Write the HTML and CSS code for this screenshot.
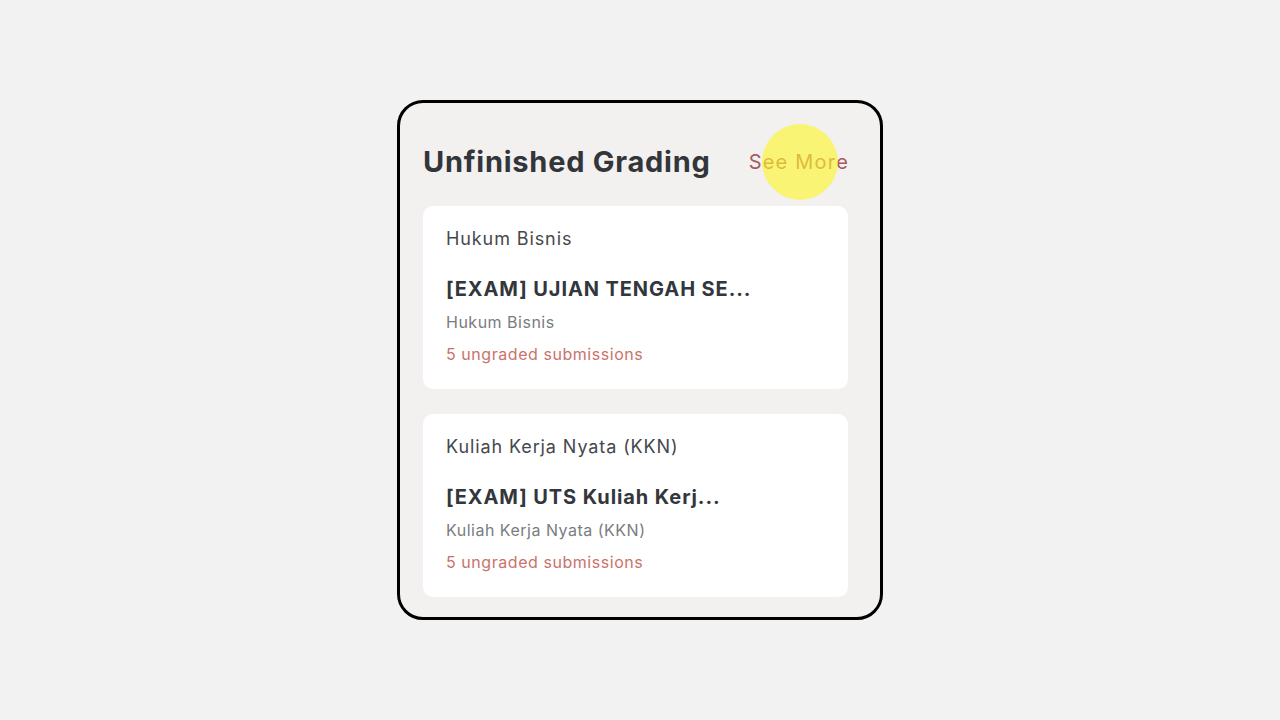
FILE: index.html
```html
<!DOCTYPE html>
<html>
<head>
<meta charset="utf-8">
<link rel="stylesheet" href="styles.css">
</head>
<body>
<div class="stage">
  <section class="panel">
    <header class="panel-head">
      <h2 class="panel-title">Unfinished Grading</h2>
      <a class="see-more">See More<span class="highlight"></span></a>
    </header>
    <div class="list">
      <article class="item">
        <div class="course">Hukum Bisnis</div>
        <div class="exam">[EXAM] UJIAN TENGAH SE...</div>
        <div class="sub">Hukum Bisnis</div>
        <div class="count">5 ungraded submissions</div>
      </article>
      <article class="item">
        <div class="course">Kuliah Kerja Nyata (KKN)</div>
        <div class="exam">[EXAM] UTS Kuliah Kerj...</div>
        <div class="sub">Kuliah Kerja Nyata (KKN)</div>
        <div class="count">5 ungraded submissions</div>
      </article>
    </div>
  </section>
</div>
</body>
</html>
```

FILE: styles.css
```css
html, body {
  margin: 0;
  padding: 0;
  background: #f2f2f2;
  font-family: Inter, "Noto Sans", sans-serif;
}
.stage {
  width: 1280px;
  height: 720px;
  display: flex;
  align-items: flex-start;
  justify-content: center;
  padding-top: 100px;
  box-sizing: border-box;
}
.panel {
  width: 486px;
  box-sizing: border-box;
  border: 3px solid #000;
  border-radius: 26px;
  background: #f2f1f0;
  padding: 42px 32px 20px 23px;
  display: flex;
  flex-direction: column;
  gap: 27px;
}
.panel-head {
  display: flex;
  align-items: center;
  justify-content: space-between;
  height: 34px;
}
.panel-title {
  margin: 0;
  font-size: 29px;
  font-weight: 700;
  color: #32353a;
  line-height: 34px;
  letter-spacing: 0.75px;
}
.see-more {
  position: relative;
  font-size: 20px;
  color: #a85a5e;
  line-height: 34px;
  letter-spacing: 1.2px;
  margin-right: -1px;
}
.highlight {
  position: absolute;
  left: 13px;
  top: -21px;
  width: 76px;
  height: 76px;
  border-radius: 50%;
  background: rgba(255, 245, 40, 0.62);
}
.list {
  display: flex;
  flex-direction: column;
  gap: 25px;
}
.item {
  background: #fff;
  border-radius: 10px;
  padding: 21px 23px 24px;
  display: flex;
  flex-direction: column;
}
.course {
  font-size: 18px;
  line-height: 24px;
  color: #45484c;
  letter-spacing: 0.9px;
}
.exam {
  margin-top: 25px;
  font-size: 20px;
  font-weight: 700;
  line-height: 26px;
  color: #33373c;
  letter-spacing: 0.9px;
}
.sub {
  margin-top: 9px;
  font-size: 16px;
  line-height: 22px;
  color: #7a7c80;
  letter-spacing: 0.5px;
}
.count {
  margin-top: 10px;
  font-size: 16px;
  line-height: 22px;
  color: #c9736c;
  letter-spacing: 0.55px;
}
```
